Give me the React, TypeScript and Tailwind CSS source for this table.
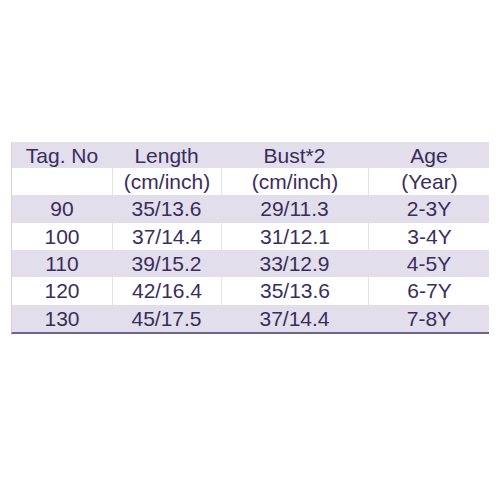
const rows = [
  { cells: ['Tag. No', 'Length', 'Bust*2', 'Age'], shaded: true },
  { cells: ['', '(cm/inch)', '(cm/inch)', '(Year)'], shaded: false },
  { cells: ['90', '35/13.6', '29/11.3', '2-3Y'], shaded: true },
  { cells: ['100', '37/14.4', '31/12.1', '3-4Y'], shaded: false },
  { cells: ['110', '39/15.2', '33/12.9', '4-5Y'], shaded: true },
  { cells: ['120', '42/16.4', '35/13.6', '6-7Y'], shaded: false },
  { cells: ['130', '45/17.5', '37/14.4', '7-8Y'], shaded: true },
];

export default function App() {
  return (
    <div className="w-[500px] h-[500px] bg-white pt-[142px] pl-[11px] font-['Liberation_Sans',Arial,sans-serif] text-[21px] text-[#3a2d5c]">
      <div className="w-[478px] border-l border-[#d4d0de] border-b-2 border-b-[#6f6297]">
        {rows.map((row, i) => (
          <div
            key={i}
            className={`grid grid-cols-[100px_109px_147px_122px] ${
              i === 0 ? 'h-[26px]' : 'h-[27.33px]'
            } ${row.shaded ? 'bg-[#e2deeb]' : 'bg-white'}`}
          >
            {row.cells.map((c, j) => (
              <div
                key={j}
                className={`flex items-center justify-center leading-none ${
                  !row.shaded && j > 0 ? 'border-l border-[#e4e1ea]' : ''
                }`}
              >
                {c}
              </div>
            ))}
          </div>
        ))}
      </div>
    </div>
  );
}
